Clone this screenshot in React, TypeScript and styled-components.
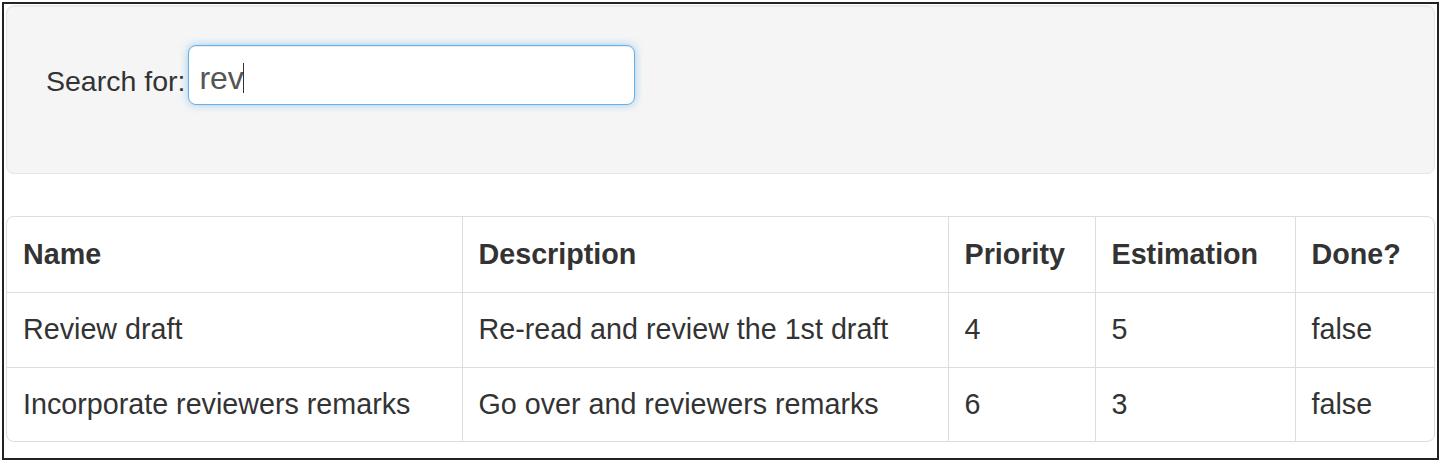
import React from 'react';
import styled, { createGlobalStyle } from 'styled-components';

interface Task {
  name: string;
  description: string;
  priority: number;
  estimation: number;
  done: boolean;
}

const TASKS: Task[] = [
  { name: 'Review draft', description: 'Re-read and review the 1st draft', priority: 4, estimation: 5, done: false },
  {
    name: 'Incorporate reviewers remarks',
    description: 'Go over and reviewers remarks',
    priority: 6,
    estimation: 3,
    done: false,
  },
];

const COLUMNS = [
  { title: 'Name', width: 455 },
  { title: 'Description', width: 486 },
  { title: 'Priority', width: 147 },
  { title: 'Estimation', width: 200 },
  { title: 'Done?', width: 140 },
];

const GlobalStyle = createGlobalStyle`
  html, body {
    margin: 0;
    padding: 0;
    background: #fff;
  }
  body {
    font-family: "Liberation Sans", Arial, sans-serif;
    color: #333;
  }
`;

const Frame = styled.div`
  box-sizing: border-box;
  width: 1437px;
  height: 458px;
  margin: 2px;
  border: 2px solid #222;
  padding: 1px 2px 0 2px;
`;

const Well = styled.div`
  box-sizing: border-box;
  height: 169px;
  padding: 39px;
  background: #f5f5f5;
  border: 1px solid #e6e6e6;
  border-radius: 8px;
  box-shadow: inset 0 1px 1px rgba(0, 0, 0, 0.05);
`;

const SearchRow = styled.div`
  display: flex;
  align-items: flex-start;
`;

const Label = styled.label`
  font-size: 28.5px;
  line-height: 34px;
  margin-top: 19px;
  margin-right: 3px;
  white-space: nowrap;
`;

const InputWrap = styled.div`
  position: relative;
`;

const SearchInput = styled.input`
  box-sizing: border-box;
  width: 447px;
  height: 60px;
  padding: 6px 10px 0 10px;
  font-family: "Liberation Sans", Arial, sans-serif;
  font-size: 32px;
  color: #555;
  background: #fff;
  border: 1px solid #66afe9;
  border-radius: 8px;
  outline: none;
  box-shadow: inset 0 1px 1px rgba(0, 0, 0, 0.075), 0 0 8px rgba(102, 175, 233, 0.6);
`;

const Caret = styled.span`
  position: absolute;
  left: 55px;
  top: 18px;
  width: 1px;
  height: 30px;
  background: #333;
`;

const TableBox = styled.div`
  margin-top: 42px;
  border: 1px solid #ddd;
  border-radius: 8px;
  overflow: hidden;
`;

const Table = styled.table`
  width: 100%;
  table-layout: fixed;
  border-collapse: collapse;
  font-size: 28.7px;
`;

const Cell = styled.td<{ $head?: boolean; $last?: boolean }>`
  box-sizing: border-box;
  height: ${p => (p.$last ? 74 : 75)}px;
  padding: 0 16px;
  vertical-align: middle;
  text-align: left;
  white-space: nowrap;
  font-weight: ${p => (p.$head ? 700 : 400)};
  border-right: 1px solid #ddd;
  border-bottom: ${p => (p.$last ? 'none' : '1px solid #ddd')};

  &:last-child {
    border-right: none;
  }
`;

const App: React.FC = () => (
  <>
    <GlobalStyle />
    <Frame>
      <Well>
        <SearchRow>
          <Label htmlFor="search">Search for:</Label>
          <InputWrap>
            <SearchInput id="search" value="rev" readOnly />
            <Caret />
          </InputWrap>
        </SearchRow>
      </Well>

      <TableBox>
        <Table>
          <colgroup>
            {COLUMNS.map(c => (
              <col key={c.title} style={{ width: c.width }} />
            ))}
          </colgroup>
          <thead>
            <tr>
              {COLUMNS.map(c => (
                <Cell as="th" $head key={c.title}>
                  {c.title}
                </Cell>
              ))}
            </tr>
          </thead>
          <tbody>
            {TASKS.map((t, i) => {
              const last = i === TASKS.length - 1;
              return (
                <tr key={t.name}>
                  <Cell $last={last}>{t.name}</Cell>
                  <Cell $last={last}>{t.description}</Cell>
                  <Cell $last={last}>{t.priority}</Cell>
                  <Cell $last={last}>{t.estimation}</Cell>
                  <Cell $last={last}>{String(t.done)}</Cell>
                </tr>
              );
            })}
          </tbody>
        </Table>
      </TableBox>
    </Frame>
  </>
);

export default App;
